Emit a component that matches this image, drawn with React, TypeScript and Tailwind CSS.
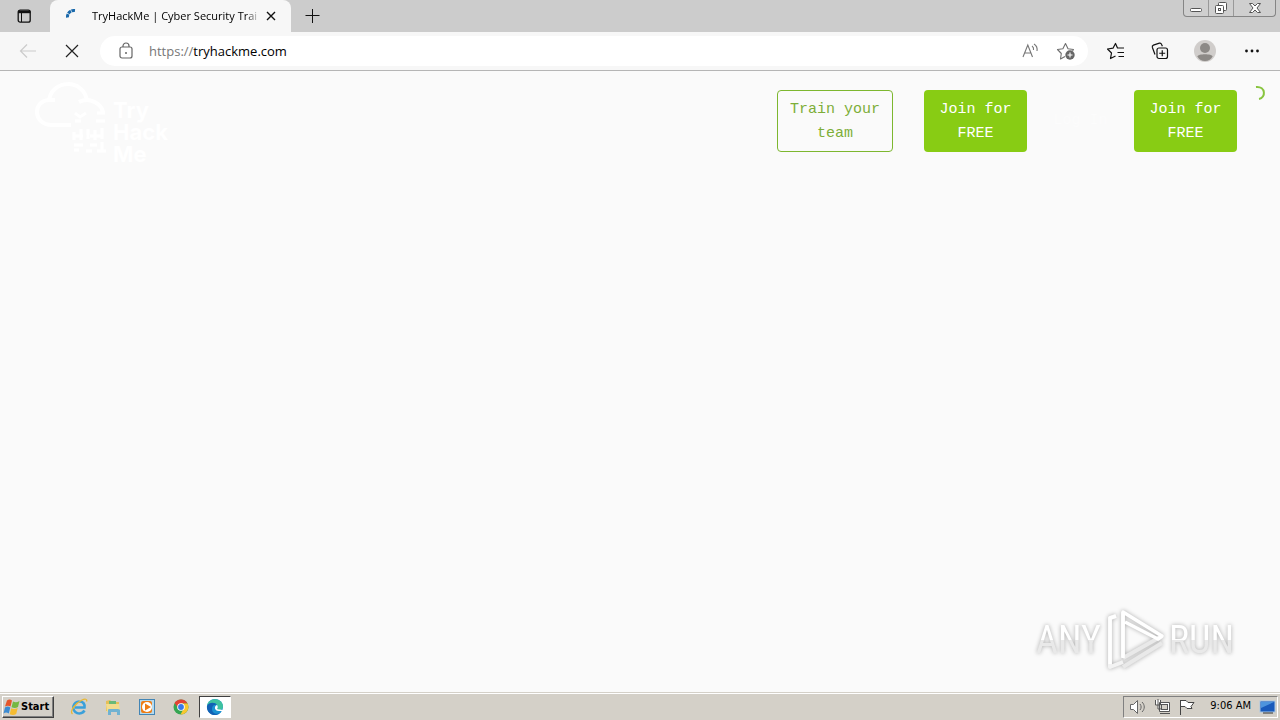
import type { ReactNode } from "react";

function IconButton({ label, className = "", children }: { label: string; className?: string; children: ReactNode }) {
  return (
    <button type="button" aria-label={label} className={`flex shrink-0 items-center justify-center ${className}`}>
      {children}
    </button>
  );
}

function TabStrip() {
  return (
    <header className="flex h-8 shrink-0 bg-[#cccccc]">
      <IconButton label="Tab actions" className="w-12">
        <svg width="16" height="16" viewBox="0 0 16 16" fill="none" stroke="#111" strokeWidth="1.3">
          <rect x="2.2" y="2.2" width="12" height="12" rx="2" />
          <path d="M2 4h12.5" strokeWidth="2.4" />
          <path d="M5.5 5v9" strokeWidth="1" />
        </svg>
      </IconButton>
      <div className="ml-[2px] flex w-[241px] items-center rounded-t-lg bg-[#f7f7f7] pr-3 pl-4">
        <svg width="14" height="14" viewBox="0 0 14 14" fill="none" stroke="#1a69ab" className="mr-3 shrink-0">
          <path d="M1.5 8.5C1 4.5 4.5 1 9 1.5" strokeWidth="3" strokeDasharray="3.5 .6" />
        </svg>
        <span className="w-[168px] shrink-0 bg-linear-to-r from-black from-90% to-[#f7f7f7] bg-clip-text text-[11px] leading-5 whitespace-nowrap text-transparent">
          TryHackMe | Cyber Security Trai
        </span>
        <IconButton label="Close tab" className="ml-1">
          <svg width="14" height="14" viewBox="0 0 14 14" stroke="#111" strokeWidth="1.4">
            <path d="M3 3l8 8M11 3l-8 8" />
          </svg>
        </IconButton>
      </div>
      <IconButton label="New tab" className="w-[43px]">
        <svg width="16" height="16" viewBox="0 0 16 16" stroke="#111" strokeWidth="1">
          <path d="M7.5 1v14M.5 7.500h14" />
        </svg>
      </IconButton>
      <div className="mr-1 ml-auto flex h-[17px] rounded-b border border-t-0 border-[#858585] bg-[#cfcfcf]">
        <IconButton label="Minimize" className="w-[25px] border-r border-[#999]">
          <svg width="14" height="14" viewBox="0 0 14 14" fill="#fff" stroke="#555">
            <rect x="1.5" y="7.5" width="11" height="3" rx="1" />
          </svg>
        </IconButton>
        <IconButton label="Restore" className="w-[25px] border-r border-[#999]">
          <svg width="14" height="14" viewBox="0 0 14 14" fill="#fff" stroke="#555">
            <rect x="4.5" y="1.5" width="8" height="8" rx="1" />
            <rect x="1.5" y="4.5" width="8" height="8" rx="1" />
            <rect x="4.5" y="7.5" width="2" height="2" />
          </svg>
        </IconButton>
        <IconButton label="Close" className="w-[41px]">
          <svg width="14" height="12" viewBox="0 0 14 12">
            <path d="M1.500 1.500h3L7 4l2.500-2.500h3L9 6l3.500 4.500h-3L7 8l-2.500 2.500h-3L5 6z" fill="#fff" stroke="#555" />
          </svg>
        </IconButton>
      </div>
    </header>
  );
}

function Toolbar() {
  return (
    <div className="flex h-[39px] shrink-0 items-center border-b border-[#b5b5b5] bg-[#f7f7f7]">
      <IconButton label="Back" className="w-14">
        <svg width="18" height="16" viewBox="0 0 18 16" fill="none" stroke="#cbcbcb" strokeWidth="1.2">
          <path d="M17 8H1.500M8 1.500L1.500 8 8 14.500" />
        </svg>
      </IconButton>
      <IconButton label="Stop" className="mr-3 w-8">
        <svg width="16" height="16" viewBox="0 0 16 16" stroke="#222" strokeWidth="1.2">
          <path d="M2 2l12 12M14 2L2 14" />
        </svg>
      </IconButton>
      <div className="flex h-[30px] min-w-0 flex-1 items-center rounded-full bg-white pr-1 pl-[18px]">
        <svg width="16" height="18" viewBox="0 0 16 18" fill="none" stroke="#666" strokeWidth="1.2" className="mr-[15px] shrink-0">
          <rect x="2" y="5" width="12" height="11" rx="2" />
          <path d="M5 5V4a3 3 0 016 0V5" />
          <circle cx="8" cy="11" r="1" fill="#666" stroke="none" />
        </svg>
        <a href="https://tryhackme.com" className="mr-auto text-[13px] leading-5 text-black">
          <span className="text-[#777]">https://</span>tryhackme.com
        </a>
        <IconButton label="Read aloud" className="w-9">
          <svg width="18" height="18" viewBox="0 0 18 18" fill="none" stroke="#777" strokeWidth="1.1">
            <path d="M2 15L6.800 3 11.500 15M3.700 11h6.200M11 4c1.500 1 1.800 2.500 1.500 4M13 2c2.500 1.500 3.500 4 3 7" />
          </svg>
        </IconButton>
        <IconButton label="Add this page to favorites" className="w-9">
          <svg width="20" height="20" viewBox="0 0 20 20" fill="none" stroke="#707070" strokeWidth="1.1" strokeLinejoin="round">
            <path d="M9 15.500l-4.500 2.500.8-5.500-3.800-4 5.400-.8L9.500 2.500l2.500 5.200 5.500.8-1 1.500" />
            <circle cx="14" cy="14" r="4.7" fill="#666" stroke="none" />
            <path d="M14 11.500v5M11.500 14h5" stroke="#fff" />
          </svg>
        </IconButton>
      </div>
      <div className="ml-[7px] flex w-[185px] shrink-0 justify-between pr-[18px] pl-3">
        <IconButton label="Favorites">
          <svg width="18" height="18" viewBox="0 0 18 18" fill="none" stroke="#111" strokeWidth="1.2" strokeLinejoin="round">
            <path d="M8.500 14l-5 2.500 1-5.500-4-4 5.500-.8L8.500 1.500l2 4.500H17M10.500 10.500H17M11.500 14.500H17" />
          </svg>
        </IconButton>
        <IconButton label="Collections">
          <svg width="18" height="18" viewBox="0 0 18 18" fill="none" stroke="#111" strokeWidth="1.2">
            <rect x="6" y="6" width="10.5" height="10.5" rx="2" />
            <path d="M11.250 8.200v6M8.200 11.250h6M4 12.500L1.400 5.500c-.4-1.200 0-2 1-2.400l6-1.900c1.200-.3 1.800.2 2.200 1.200l.8 1.800" />
          </svg>
        </IconButton>
        <IconButton label="Profile">
          <svg width="22" height="22" viewBox="0 0 22 22">
            <circle cx="11" cy="11" r="11" fill="#d0cdcb" />
            <circle cx="11" cy="8" r="5" fill="#8c8986" />
            <path d="M3.500 16.500c0-3 15-3 15 0-1 2.500-4 4.500-7.500 4.500s-6.500-2-7.500-4.500z" fill="#8c8986" />
          </svg>
        </IconButton>
        <IconButton label="Settings and more">
          <svg width="20" height="16" viewBox="0 0 20 16" fill="#111">
            <circle cx="4.500" cy="8" r="1.400" />
            <circle cx="10" cy="8" r="1.400" />
            <circle cx="15.500" cy="8" r="1.400" />
          </svg>
        </IconButton>
      </div>
    </div>
  );
}

function BrandLogo() {
  return (
    <a href="#home" aria-label="TryHackMe home" className="flex text-white">
      <svg width="78" height="80" viewBox="0 0 78 80" fill="none" stroke="white" strokeWidth="4">
        <path d="M36 43H17C-2 43-3 19 14 18h6M14 19C16-3 49-4 52 19M44 20c10-5 23 1 24 11" />
        <g strokeWidth="3">
          <path d="M40 31l5 4 6-4M62 31h8M40 39h6M61 39h9M39 50v8M46 47v11M53 47v10M60 48v10M67 46v11M38 54h10M55 54h13M39 63h9M55 63h7M67 60v10M39 68h5M51 69h6M62 69h9" />
        </g>
      </svg>
      <span className="flex flex-col pt-[17px] font-['Inter',sans-serif] text-[22px] leading-[22px] font-bold">
        <span>Try</span>
        <span>Hack</span>
        <span>Me</span>
      </span>
    </a>
  );
}

function Watermark() {
  return (
    <div className="absolute right-[46px] bottom-5 flex items-center gap-1 font-['Liberation_Sans_Narrow','Roboto_Condensed','Roboto',sans-serif] text-[38px] leading-[64px] text-white [filter:drop-shadow(0_0_2px_#aaa)]">
      <span className="bg-linear-to-b from-white from-50% to-[#e9e9e9] to-50% bg-clip-text text-transparent">ANY</span>
      <svg width="60" height="64" viewBox="0 0 60 64" fill="none" strokeLinejoin="round">
        <path d="M11 8L5 10V59l13-5M18 4v45" stroke="#f3f3f3" strokeWidth="4" />
        <path d="M18 50l39-22M18 59l39-24" stroke="#e9e9e9" strokeWidth="4" />
        <path d="M11 8L5 10V56M18 50V4l39 24-4 3L20 14" stroke="white" strokeWidth="3.500" />
      </svg>
      <span className="bg-linear-to-b from-white from-50% to-[#e9e9e9] to-50% bg-clip-text text-transparent">RUN</span>
    </div>
  );
}

function Page() {
  return (
    <main className="relative flex-1 bg-[#fafafa]">
      <nav className="flex items-start pt-[11px] pr-[14px] pl-[35px] font-['Liberation_Mono',monospace] text-[15px] leading-6">
        <BrandLogo />
        <div className="ml-auto flex items-center gap-[31px] pt-2 text-center">
          <a href="#team" className="w-[116px] rounded border border-[#7db72f] px-2 pt-[7px] pb-[5px] text-[#7dae38]">
            Train your team
          </a>
          <a href="#join" className="w-[103px] rounded bg-[#88cc14] px-2 pt-2 pb-[6px] text-white">
            Join for FREE
          </a>
        </div>
        <a href="#login" className="mt-[27px] w-[107px] text-center text-[#fcfcfc]">
          Log In
        </a>
        <a href="#signup" className="mt-2 w-[103px] rounded bg-[#88cc14] px-2 pt-2 pb-[6px] text-center text-white">
          Join for FREE
        </a>
        <svg width="11" height="16" viewBox="0 0 11 16" fill="none" className="ml-[18px] mt-[3px]" aria-label="Loading">
          <path d="M1 2c10-1 10 11 3 12" stroke="#88c43e" strokeWidth="2" />
        </svg>
      </nav>
      <Watermark />
    </main>
  );
}

function Taskbar() {
  return (
    <footer className="flex h-7 shrink-0 items-center bg-[#d4d0c8] px-[2px] font-['DejaVu_Sans_Condensed','DejaVu_Sans',sans-serif] shadow-[inset_0_1px_0_#d4d0c8,inset_0_2px_0_#fff]">
      <button type="button" className="mt-[2px] flex h-[22px] w-[52px] items-center gap-px border border-t-white border-r-[#404040] border-b-[#404040] border-l-white text-[11px] font-bold text-black shadow-[inset_-1px_-1px_0_#808080]">
        <svg width="17" height="17" viewBox="0 0 17 17" className="shrink-0">
          <path d="M4 1.500c2-1.500 3.500-1 5 0L7.500 7.500c-2-1.300-3.500-1-5.500 0z" fill="#e5562b" />
          <path d="M10 2.500c2 1 4 1 6.500-.5L15 8c-2 1.300-4 1.300-6.500.3z" fill="#75b843" />
          <path d="M2 8.500c2-1.300 3.500-1.300 5.300 0l-1.500 6c-2-1.300-3.500-1.300-5.300 0z" fill="#3c8bd2" />
          <path d="M8.200 9.200c2 1 4 1 6.500-.3l-1.500 6c-2 1.300-4 1.300-6.500.3z" fill="#f5bc31" />
        </svg>
        Start
      </button>
      <div className="mt-px ml-2 flex items-center">
        <IconButton label="Internet Explorer" className="w-[34px]">
          <svg width="18" height="18" viewBox="0 0 18 18" fill="none">
            <path d="M14.500 12.500A6 6 0 119.500 3.500c4 0 5.500 3 5 6H5" stroke="#3aa0da" strokeWidth="2.600" />
            <path d="M2.500 16C-1 13 6 5 12 2c3-1.500 5.500-1 4.500 1.500" stroke="#e9b833" strokeWidth="1.300" />
          </svg>
        </IconButton>
        <IconButton label="File Explorer" className="w-[34px]">
          <svg width="18" height="18" viewBox="0 0 18 18">
            <path d="M2 3l4-1 2 2h7v9H2z" fill="#e6bf58" />
            <path d="M5 3h7v5H5z" fill="#69b978" />
            <path d="M2 6h13l1 8H3z" fill="#f3dc8e" />
            <path d="M4 17v-5c0-1 1-1 1-1h9c1 0 2 1 2 1v5h-3v-3H7v3z" fill="#70b2d2" />
          </svg>
        </IconButton>
        <IconButton label="Media Player" className="w-[34px]">
          <svg width="18" height="18" viewBox="0 0 18 18">
            <rect x="1.500" y="1.500" width="15" height="15" fill="#b5daef" stroke="#4385b5" />
            <rect x="3" y="3" width="11" height="12" rx="2" fill="#ee7d16" />
            <circle cx="9" cy="9" r="5" fill="white" />
            <path d="M7 5.500v7l6-3.500z" fill="#ee7d16" />
          </svg>
        </IconButton>
        <IconButton label="Chrome" className="w-[34px]">
          <svg width="16" height="16" viewBox="0 0 16 16">
            <circle cx="8" cy="8" r="7.500" fill="#35a552" />
            <path d="M1.500 4A7.500 7.500 0 0114.500 4.500H8L6 10z" fill="#e34234" />
            <path d="M14.500 4.500a7.500 7.500 0 01-7 11L11 9 8 4.500z" fill="#f9c72e" />
            <circle cx="8" cy="8" r="3.800" fill="white" />
            <circle cx="8" cy="8" r="2.900" fill="#3979e9" />
          </svg>
        </IconButton>
        <IconButton label="Edge" className="ml-px h-[22px] w-8 border border-t-[#404040] border-r-white border-b-white border-l-[#404040] bg-white">
          <svg width="18" height="18" viewBox="0 0 18 18">
            <circle cx="9" cy="9" r="8" fill="#1b91d1" />
            <path d="M1 8C2-1 16-1 17 8c0 5-6 5-6 3 2-3-1-6-4-6-3 0-5 1-6 3z" fill="#3fc2a0" />
            <path d="M1 8c2-4 8-4 10-1-3-1-5 1-5 4 0 4 4 6 8 4-6 5-14 0-13-7z" fill="#1261b4" />
            <path d="M11 7c-3 1-3 6 2 6h4c1-2-4-1-6-2 1-1 1-3 0-4z" fill="white" />
          </svg>
        </IconButton>
      </div>
      <div className="mt-px ml-auto flex h-[22px] items-center border border-t-[#808080] border-r-white border-b-white border-l-[#808080] pl-[5px] text-[11px] text-black">
        <svg width="18" height="18" viewBox="0 0 18 18" fill="white" stroke="#666" className="mr-[7px]">
          <path d="M1.500 6.500h3l4-4v13l-4-4h-3z" />
          <path d="M11 6c1.500 2 1.500 4 0 6M13 4c3 3 3 7 0 10" fill="none" />
        </svg>
        <svg width="17" height="18" viewBox="0 0 17 18" fill="white" stroke="#555" className="mr-[7px]">
          <path d="M5.500 4.500h10v9h-10zM6 15.500h10M1.500 2v5h5V2M4 1v10h4" />
          <rect x="7.500" y="6.500" width="6" height="5" fill="#d4d0c8" />
        </svg>
        <svg width="18" height="18" viewBox="0 0 18 18" fill="white" stroke="#444" className="mr-[14px]">
          <path d="M2.500 2v15M3 2.500h5l2 2h6l-3 4 1 2H9l-2-2H3" />
        </svg>
        <time>9:06 AM</time>
        <svg width="18" height="16" viewBox="0 0 18 16" className="ml-2">
          <rect x="1" y="2" width="15" height="11" fill="#195abb" stroke="#a9c7e4" />
          <path d="M2 3h13L2 9z" fill="#4d94dd" />
          <path d="M4 14h10" stroke="#333" />
        </svg>
      </div>
    </footer>
  );
}

export default function App() {
  return (
    <div className="flex min-h-screen flex-col font-['Open_Sans','Noto_Sans',sans-serif]">
      <TabStrip />
      <Toolbar />
      <Page />
      <Taskbar />
    </div>
  );
}
